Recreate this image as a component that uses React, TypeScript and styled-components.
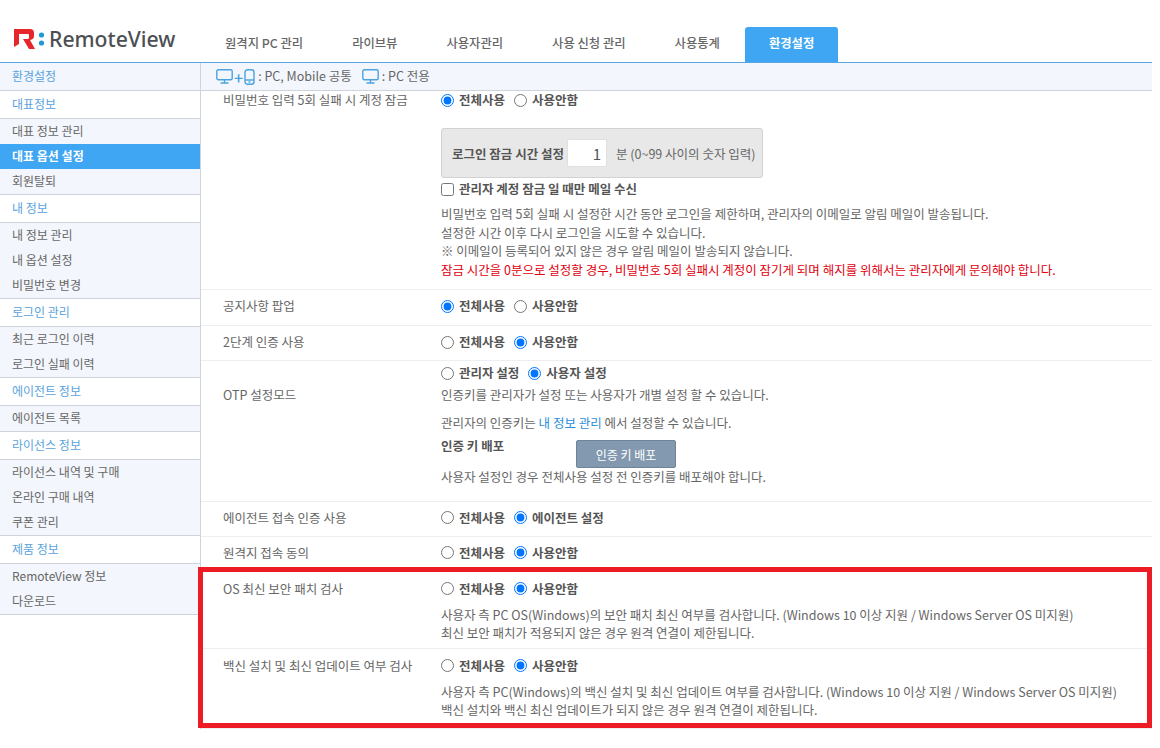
import styled, { createGlobalStyle } from 'styled-components';

const GlobalStyle = createGlobalStyle`
  html, body {
    margin: 0;
    padding: 0;
    background: #fff;
  }
  body {
    font-family: "Noto Sans CJK KR", "Noto Sans", sans-serif;
    font-size: 12.5px;
    color: #666;
  }
  * {
    box-sizing: border-box;
  }
`;

const Page = styled.div`
  position: relative;
  width: 1152px;
`;

const Header = styled.header`
  display: flex;
  align-items: flex-end;
  height: 63px;
  border-bottom: 1px solid #5aa5e0;
`;

const LogoLink = styled.a`
  display: flex;
  align-items: center;
  align-self: flex-start;
  width: 201px;
  height: 20px;
  margin-top: 29px;
  padding-left: 14px;
`;

const LogoText = styled.span`
  margin-left: 4px;
  font-family: "Noto Sans", sans-serif;
  font-size: 21.2px;
  font-weight: 500;
  line-height: 20px;
  color: #4c4f53;
`;

const Tabs = styled.nav`
  display: flex;
  gap: 1px;
`;

const Tab = styled.a<{ $active?: boolean }>`
  height: 35px;
  padding: 0 24px;
  border-radius: 3px 3px 0 0;
  font-size: 12.32px;
  font-weight: ${(p) => (p.$active ? 700 : 500)};
  line-height: 33px;
  color: ${(p) => (p.$active ? '#fff' : '#666')};
  background: ${(p) => (p.$active ? '#3ea6f2' : 'transparent')};
`;

const Body = styled.div`
  display: grid;
  grid-template-columns: 201px 1fr;
`;

const Sidebar = styled.aside`
  border-right: 1px solid #cfd3da;
  font-size: 12px;
`;

const SideTitle = styled.div<{ $tinted?: boolean }>`
  height: 28px;
  padding-left: 12px;
  border-bottom: 1px solid #cfd3da;
  line-height: 25px;
  color: #5aa3dc;
  background: ${(p) => (p.$tinted ? '#f3f6fc' : '#fff')};
`;

const SideList = styled.ul`
  margin: 0;
  padding: 0;
  list-style: none;
  background: #f3f6fc;
  border-bottom: 1px solid #cfd3da;
`;

const SideItem = styled.li<{ $active?: boolean }>`
  height: 25px;
  padding-left: 12px;
  line-height: 23px;
  font-weight: ${(p) => (p.$active ? 700 : 400)};
  color: ${(p) => (p.$active ? '#fff' : '#666')};
  background: ${(p) => (p.$active ? '#3ea6f2' : 'transparent')};
`;

const Legend = styled.div`
  display: flex;
  align-items: center;
  height: 28px;
  padding-left: 15px;
  border-bottom: 1px solid #cfd3da;
  background: #f3f6fc;
  color: #666;
`;

const LegendText = styled.span`
  margin: 0 10px 0 3px;
  padding-bottom: 2px;
`;

const Plus = styled.span`
  margin: 0 1px 0 1px;
  font-size: 16px;
  font-weight: 500;
  line-height: 14px;
  color: #4aa3df;
`;

const Row = styled.div<{ $top: number; $bottom: number }>`
  display: grid;
  grid-template-columns: 218px 1fr;
  padding: ${(p) => p.$top}px 0 ${(p) => p.$bottom}px 22px;
  border-bottom: 1px solid #eceef1;
`;

const Label = styled.div<{ $offset?: number }>`
  margin-top: ${(p) => p.$offset ?? 0}px;
  line-height: 18px;
`;

const RadioLine = styled.div`
  display: flex;
  align-items: center;
  gap: 9px;
  height: 18px;
`;

const Choice = styled.label`
  display: flex;
  align-items: center;
  gap: 5px;
  font-weight: 700;
  line-height: 18px;
  color: #555;
`;

const NativeInput = styled.input`
  width: 13px;
  height: 13px;
  margin: 0;
`;

const LockBox = styled.div`
  display: flex;
  align-items: center;
  width: 322px;
  height: 50px;
  margin-top: 19px;
  padding-left: 10px;
  border: 1px solid #d2d2d2;
  border-radius: 3px;
  background: #e8e8e8;
`;

const LockTitle = styled.b`
  margin-right: 3px;
  color: #555;
`;

const MinuteInput = styled.input`
  width: 40px;
  height: 28px;
  margin-right: 9px;
  padding: 0 5px 0 0;
  border: 1px solid #e0e0e0;
  border-radius: 2px;
  background: #fff;
  font: inherit;
  font-size: 15px;
  color: #555;
  text-align: right;
`;

const CheckLine = styled.label`
  display: flex;
  align-items: center;
  gap: 5px;
  height: 18px;
  margin-top: 2px;
  font-weight: 700;
  line-height: 18px;
  color: #555;
`;

const Help = styled.p<{ $top: number }>`
  margin: ${(p) => p.$top}px 0 0;
  line-height: 18.5px;
`;

const Alert = styled.span`
  color: #e0000e;
`;

const TextLink = styled.a`
  color: #2a8ed8;
`;

const KeyRow = styled.div`
  display: flex;
  align-items: flex-start;
  margin-top: 5px;
`;

const KeyLabel = styled.b`
  width: 135px;
  line-height: 18px;
  color: #555;
`;

const KeyButton = styled.button`
  width: 100px;
  height: 28px;
  margin-top: 3px;
  border: 1px solid #718497;
  border-radius: 2px;
  background: #8299af;
  font: inherit;
  font-size: 12px;
  color: #fff;
`;

const Highlight = styled.div`
  position: absolute;
  left: 198px;
  top: 567px;
  width: 954px;
  height: 161px;
  border: 5px solid #ed1c24;
  pointer-events: none;
`;

const tabs = ['원격지 PC 관리', '라이브뷰', '사용자관리', '사용 신청 관리', '사용통계', '환경설정'];

const menu = [
  { title: '대표정보', items: ['대표 정보 관리', '대표 옵션 설정', '회원탈퇴'] },
  { title: '내 정보', items: ['내 정보 관리', '내 옵션 설정', '비밀번호 변경'] },
  { title: '로그인 관리', items: ['최근 로그인 이력', '로그인 실패 이력'] },
  { title: '에이전트 정보', items: ['에이전트 목록'] },
  { title: '라이선스 정보', items: ['라이선스 내역 및 구매', '온라인 구매 내역', '쿠폰 관리'] },
  { title: '제품 정보', items: ['RemoteView 정보', '다운로드'] },
];

const LogoMark = () => (
  <svg width="31" height="20" viewBox="0 0 31 20">
    <path d="M0 0H16Q20 0 20 4V7Q20 10.500 16 11L21 20H15L9 10H14Q15 10 15 8.500V6Q15 5 14 5H5V15L0 18Z" fill="#e7262b" />
    <circle cx="27.500" cy="6" r="2.600" fill="#1e9bd7" />
    <circle cx="27.500" cy="14" r="2.600" fill="#1e9bd7" />
  </svg>
);

const Monitor = () => (
  <svg width="17" height="15" viewBox="0 0 17 15" fill="none" stroke="#4aa3df" strokeWidth="1.400">
    <rect x="0.800" y="0.800" width="15.400" height="10" rx="1.500" />
    <path d="M8.500 11V13.500M4.500 14H12.500" />
  </svg>
);

const Phone = () => (
  <svg width="11" height="16" viewBox="0 0 11 16" fill="none" stroke="#4aa3df" strokeWidth="1.400">
    <rect x="1" y="0.800" width="9" height="14.400" rx="2.500" />
    <path d="M1 11H10" />
    <path d="M4.500 13H6.500" />
  </svg>
);

const Radios = ({ name, options, checked }: { name: string; options: string[]; checked: number }) => (
  <RadioLine>
    {options.map((option, i) => (
      <Choice key={option}>
        <NativeInput type="radio" name={name} defaultChecked={i === checked} />
        {option}
      </Choice>
    ))}
  </RadioLine>
);

const useNot = ['전체사용', '사용안함'];

export default function App() {
  return (
    <Page>
      <GlobalStyle />
      <Header>
        <LogoLink>
          <LogoMark />
          <LogoText>RemoteView</LogoText>
        </LogoLink>
        <Tabs>
          {tabs.map((tab) => (
            <Tab key={tab} $active={tab === '환경설정'}>
              {tab}
            </Tab>
          ))}
        </Tabs>
      </Header>
      <Body>
        <Sidebar>
          <SideTitle $tinted>환경설정</SideTitle>
          {menu.map((group) => (
            <div key={group.title}>
              <SideTitle>{group.title}</SideTitle>
              <SideList>
                {group.items.map((item) => (
                  <SideItem key={item} $active={item === '대표 옵션 설정'}>
                    {item}
                  </SideItem>
                ))}
              </SideList>
            </div>
          ))}
        </Sidebar>
        <main>
          <Legend>
            <Monitor />
            <Plus>+</Plus>
            <Phone />
            <LegendText>: PC, Mobile 공통</LegendText>
            <Monitor />
            <LegendText>: PC 전용</LegendText>
          </Legend>

          <Row $top={0} $bottom={10}>
            <Label>비밀번호 입력 5회 실패 시 계정 잠금</Label>
            <div>
              <Radios name="lock" options={useNot} checked={0} />
              <LockBox>
                <LockTitle>로그인 잠금 시간 설정</LockTitle>
                <MinuteInput defaultValue="1" />
                분 (0~99 사이의 숫자 입력)
              </LockBox>
              <CheckLine>
                <NativeInput type="checkbox" />
                관리자 계정 잠금 일 때만 메일 수신
              </CheckLine>
              <Help $top={7}>
                비밀번호 입력 5회 실패 시 설정한 시간 동안 로그인을 제한하며, 관리자의 이메일로 알림 메일이 발송됩니다.
                <br />
                설정한 시간 이후 다시 로그인을 시도할 수 있습니다.
                <br />※ 이메일이 등록되어 있지 않은 경우 알림 메일이 발송되지 않습니다.
                <br />
                <Alert>
                  잠금 시간을 0분으로 설정할 경우, 비밀번호 5회 실패시 계정이 잠기게 되며 해지를 위해서는 관리자에게 문의해야 합니다.
                </Alert>
              </Help>
            </div>
          </Row>

          <Row $top={7} $bottom={10}>
            <Label>공지사항 팝업</Label>
            <Radios name="notice" options={useNot} checked={0} />
          </Row>

          <Row $top={7} $bottom={9}>
            <Label>2단계 인증 사용</Label>
            <Radios name="twofactor" options={useNot} checked={1} />
          </Row>

          <Row $top={3} $bottom={14}>
            <Label $offset={22}>OTP 설정모드</Label>
            <div>
              <Radios name="otp" options={['관리자 설정', '사용자 설정']} checked={1} />
              <Help $top={4}>인증키를 관리자가 설정 또는 사용자가 개별 설정 할 수 있습니다.</Help>
              <Help $top={9}>
                관리자의 인증키는 <TextLink>내 정보 관리</TextLink> 에서 설정할 수 있습니다.
              </Help>
              <KeyRow>
                <KeyLabel>인증 키 배포</KeyLabel>
                <KeyButton type="button">인증 키 배포</KeyButton>
              </KeyRow>
              <Help $top={0}>사용자 설정인 경우 전체사용 설정 전 인증키를 배포해야 합니다.</Help>
            </div>
          </Row>

          <Row $top={7} $bottom={9}>
            <Label>에이전트 접속 인증 사용</Label>
            <Radios name="agent" options={['전체사용', '에이전트 설정']} checked={1} />
          </Row>

          <Row $top={7} $bottom={9}>
            <Label>원격지 접속 동의</Label>
            <Radios name="consent" options={useNot} checked={1} />
          </Row>

          <Row $top={8} $bottom={5}>
            <Label>OS 최신 보안 패치 검사</Label>
            <div>
              <Radios name="patch" options={useNot} checked={1} />
              <Help $top={8}>
                사용자 측 PC OS(Windows)의 보안 패치 최신 여부를 검사합니다. (Windows 10 이상 지원 / Windows Server OS 미지원)
                <br />
                최신 보안 패치가 적용되지 않은 경우 원격 연결이 제한됩니다.
              </Help>
            </div>
          </Row>

          <Row $top={8} $bottom={8}>
            <Label>백신 설치 및 최신 업데이트 여부 검사</Label>
            <div>
              <Radios name="vaccine" options={useNot} checked={1} />
              <Help $top={8}>
                사용자 측 PC(Windows)의 백신 설치 및 최신 업데이트 여부를 검사합니다. (Windows 10 이상 지원 / Windows Server OS 미지원)
                <br />
                백신 설치와 백신 최신 업데이트가 되지 않은 경우 원격 연결이 제한됩니다.
              </Help>
            </div>
          </Row>
        </main>
      </Body>
      <Highlight />
    </Page>
  );
}
